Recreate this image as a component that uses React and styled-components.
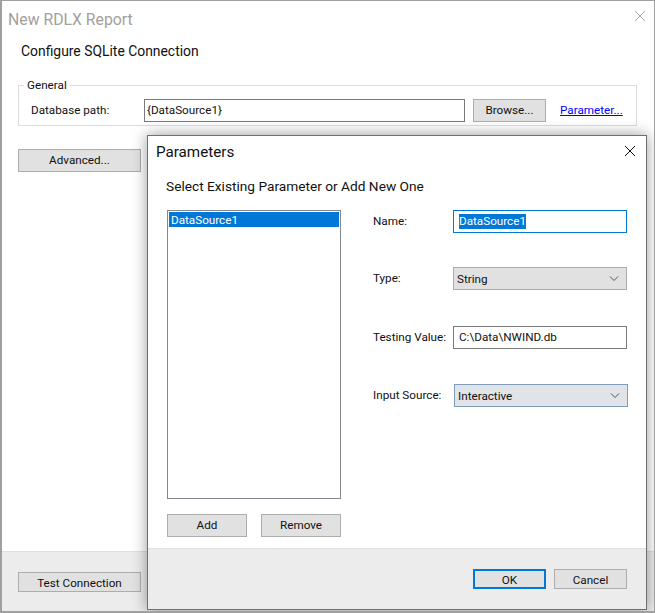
import * as React from 'react'
import styled, { createGlobalStyle } from 'styled-components'

const GlobalStyle = createGlobalStyle`
  html, body {
    margin: 0;
    padding: 0;
    background: #fff;
  }
  body {
    font-family: Roboto, "Open Sans", "Liberation Sans", sans-serif;
    font-size: 11.7px;
    color: #111;
  }
  * {
    box-sizing: border-box;
  }
`

const Window = styled.div`
  position: relative;
  width: 655px;
  height: 613px;
  display: flex;
  flex-direction: column;
  background: #fff;
  border: 1px solid #a0a0a0;
  border-bottom-width: 2px;
  border-left-width: 2px;
  overflow: hidden;
`

const TitleBar = styled.div`
  height: 36px;
  flex: none;
  display: flex;
  align-items: center;
  justify-content: space-between;
  padding: 0 8px 0 6px;
`

const DimTitle = styled.div`
  font-size: 15.8px;
  line-height: 20px;
  margin-top: 2px;
  color: #a3a09c;
`

const CloseIcon = styled.svg`
  display: block;
  width: 12px;
  height: 12px;
  margin-bottom: ${(p) => p.$lift}px;
  stroke: ${(p) => p.$color};
  stroke-width: 1;
  fill: none;
`

const Close = ({ color, lift }) => (
  <CloseIcon $color={color} $lift={lift} viewBox="0 0 12 12">
    <path d="M1 1 L11 11 M11 1 L1 11" />
  </CloseIcon>
)

const Content = styled.div`
  flex: 1;
  padding: 4px 17px 0 16px;
`

const Heading = styled.div`
  font-size: 13.9px;
  line-height: 20px;
  padding-left: 3px;
`

const GroupBox = styled.fieldset`
  margin: 17px 0 0;
  padding: 6px 12px 2px 12px;
  height: 48px;
  width: 619px;
  min-width: 0;
  border: 1px solid #dcdcdc;
  display: flex;
  align-items: center;
`

const GroupLegend = styled.legend`
  margin-left: -7px;
  padding: 0 3px;
  line-height: 14px;
`

const PathLabel = styled.div`
  width: 113px;
  flex: none;
  padding-bottom: 2px;
`

const TextBox = styled.div`
  width: ${(p) => p.$width}px;
  height: 23px;
  flex: none;
  display: flex;
  align-items: center;
  padding-left: ${(p) => p.$pad || 2}px;
  padding-bottom: 1px;
  background: #fff;
  white-space: nowrap;
  border: ${(p) => (p.$focused ? '1px solid #0078d7' : '1px solid #7a7a7a')};
`

const Selected = styled.span`
  background: #0078d7;
  color: #fff;
  line-height: 15px;
`

const Button = styled.div`
  width: ${(p) => p.$width}px;
  height: ${(p) => p.$height || 23}px;
  flex: none;
  display: flex;
  align-items: center;
  justify-content: center;
  padding: ${(p) => (p.$height ? '1px 0 0' : '0 0 1px')};
  background: #e1e1e1;
  white-space: nowrap;
  border: ${(p) => (p.$primary ? '2px solid #0078d7' : '1px solid #adadad')};
`

const BrowseButton = styled(Button)`
  margin-left: 8px;
`

const ParamLink = styled.a`
  margin-left: 14px;
  padding-bottom: 1px;
  color: #0000ff;
  text-decoration: underline;
  white-space: nowrap;
`

const AdvancedRow = styled.div`
  margin-top: 23px;
`

const Footer = styled.div`
  flex: none;
  height: 60px;
  background: #ececec;
  border-top: 1px solid #dfdfdf;
  padding: 20px 0 0 16px;
`

/* the modal sits over the window */
const Dialog = styled.div`
  position: absolute;
  left: 145px;
  top: 134px;
  width: 500px;
  height: 475px;
  display: flex;
  flex-direction: column;
  background: #fff;
  border: 1px solid #6f6f6f;
  box-shadow: 0 0 14px rgba(0, 0, 0, 0.4);
`

const DialogHead = styled.div`
  flex: none;
  height: 32px;
  display: flex;
  align-items: center;
  justify-content: space-between;
  padding: 0 10px 0 8px;
`

const DialogTitle = styled.div`
  font-size: 15.2px;
  line-height: 20px;
`

const DialogBody = styled.div`
  flex: 1;
  padding: 8px 19px 0 19px;
`

const Prompt = styled.div`
  font-size: 13.7px;
  line-height: 20px;
  margin-left: -1px;
`

const Columns = styled.div`
  margin-top: 14px;
  display: flex;
`

const ListColumn = styled.div`
  width: 174px;
  flex: none;
`

const ListBox = styled.div`
  height: 289px;
  border: 1px solid #828790;
  padding: 1px;
`

const ListItem = styled.div`
  height: 15px;
  line-height: 17px;
  padding-left: 2px;
  background: #0078d7;
  color: #fff;
`

const ListButtons = styled.div`
  margin-top: 15px;
  display: flex;
  justify-content: space-between;
`

const FormColumn = styled.div`
  margin-left: 32px;
  flex: 1;
`

const Field = styled.div`
  display: flex;
  align-items: center;
  height: 23px;
  margin-bottom: ${(p) => p.$after || 0}px;
`

const FieldLabel = styled.div`
  width: ${(p) => p.$width || 80}px;
  flex: none;
  white-space: nowrap;
  padding-bottom: 1px;
`

const Select = styled.div`
  width: 174px;
  height: 23px;
  flex: none;
  display: flex;
  align-items: center;
  justify-content: space-between;
  padding: 0 7px 0 3px;
  background: ${(p) => (p.$hot ? '#e0e4e8' : '#e1e1e1')};
  border: 1px solid ${(p) => (p.$hot ? '#7f9db9' : '#adadad')};
`

const Chevron = styled.svg`
  display: block;
  width: 10px;
  height: 6px;
  fill: none;
  stroke: #555;
  stroke-width: 1;
`

const SelectArrow = () => (
  <Chevron viewBox="0 0 10 6">
    <path d="M1 0.5 L5 4.5 L9 0.5" />
  </Chevron>
)

const DialogFooter = styled.div`
  flex: none;
  height: 61px;
  background: #ececec;
  border-top: 1px solid #dfdfdf;
  display: flex;
  justify-content: flex-end;
  gap: 8px;
  padding: 20px 19px 0 0;
`

const App = () => (
  <>
    <GlobalStyle />
    <Window>
      <TitleBar>
        <DimTitle>New RDLX Report</DimTitle>
        <Close color="#a8a8a8" lift={6} />
      </TitleBar>
      <Content>
        <Heading>Configure SQLite Connection</Heading>
        <GroupBox>
          <GroupLegend>General</GroupLegend>
          <PathLabel>Database path:</PathLabel>
          <TextBox $width={321}>{'{DataSource1}'}</TextBox>
          <BrowseButton $width={73}>Browse...</BrowseButton>
          <ParamLink>Parameter...</ParamLink>
        </GroupBox>
        <AdvancedRow>
          <Button $width={123}>Advanced...</Button>
        </AdvancedRow>
      </Content>
      <Footer>
        <Button $width={123} $height={20}>Test Connection</Button>
      </Footer>

      <Dialog>
        <DialogHead>
          <DialogTitle>Parameters</DialogTitle>
          <Close color="#111" lift={2} />
        </DialogHead>
        <DialogBody>
          <Prompt>Select Existing Parameter or Add New One</Prompt>
          <Columns>
            <ListColumn>
              <ListBox>
                <ListItem>DataSource1</ListItem>
              </ListBox>
              <ListButtons>
                <Button $width={80}>Add</Button>
                <Button $width={80}>Remove</Button>
              </ListButtons>
            </ListColumn>
            <FormColumn>
              <Field $after={34}>
                <FieldLabel>Name:</FieldLabel>
                <TextBox $width={174} $pad={5} $focused>
                  <Selected>DataSource1</Selected>
                </TextBox>
              </Field>
              <Field $after={36}>
                <FieldLabel>Type:</FieldLabel>
                <Select>
                  String
                  <SelectArrow />
                </Select>
              </Field>
              <Field $after={35}>
                <FieldLabel>Testing Value:</FieldLabel>
                <TextBox $width={174} $pad={5}>C:\Data\NWIND.db</TextBox>
              </Field>
              <Field>
                <FieldLabel $width={81}>Input Source:</FieldLabel>
                <Select $hot>
                  Interactive
                  <SelectArrow />
                </Select>
              </Field>
            </FormColumn>
          </Columns>
        </DialogBody>
        <DialogFooter>
          <Button $width={73} $height={20} $primary>OK</Button>
          <Button $width={73} $height={20}>Cancel</Button>
        </DialogFooter>
      </Dialog>
    </Window>
  </>
)

export default App
